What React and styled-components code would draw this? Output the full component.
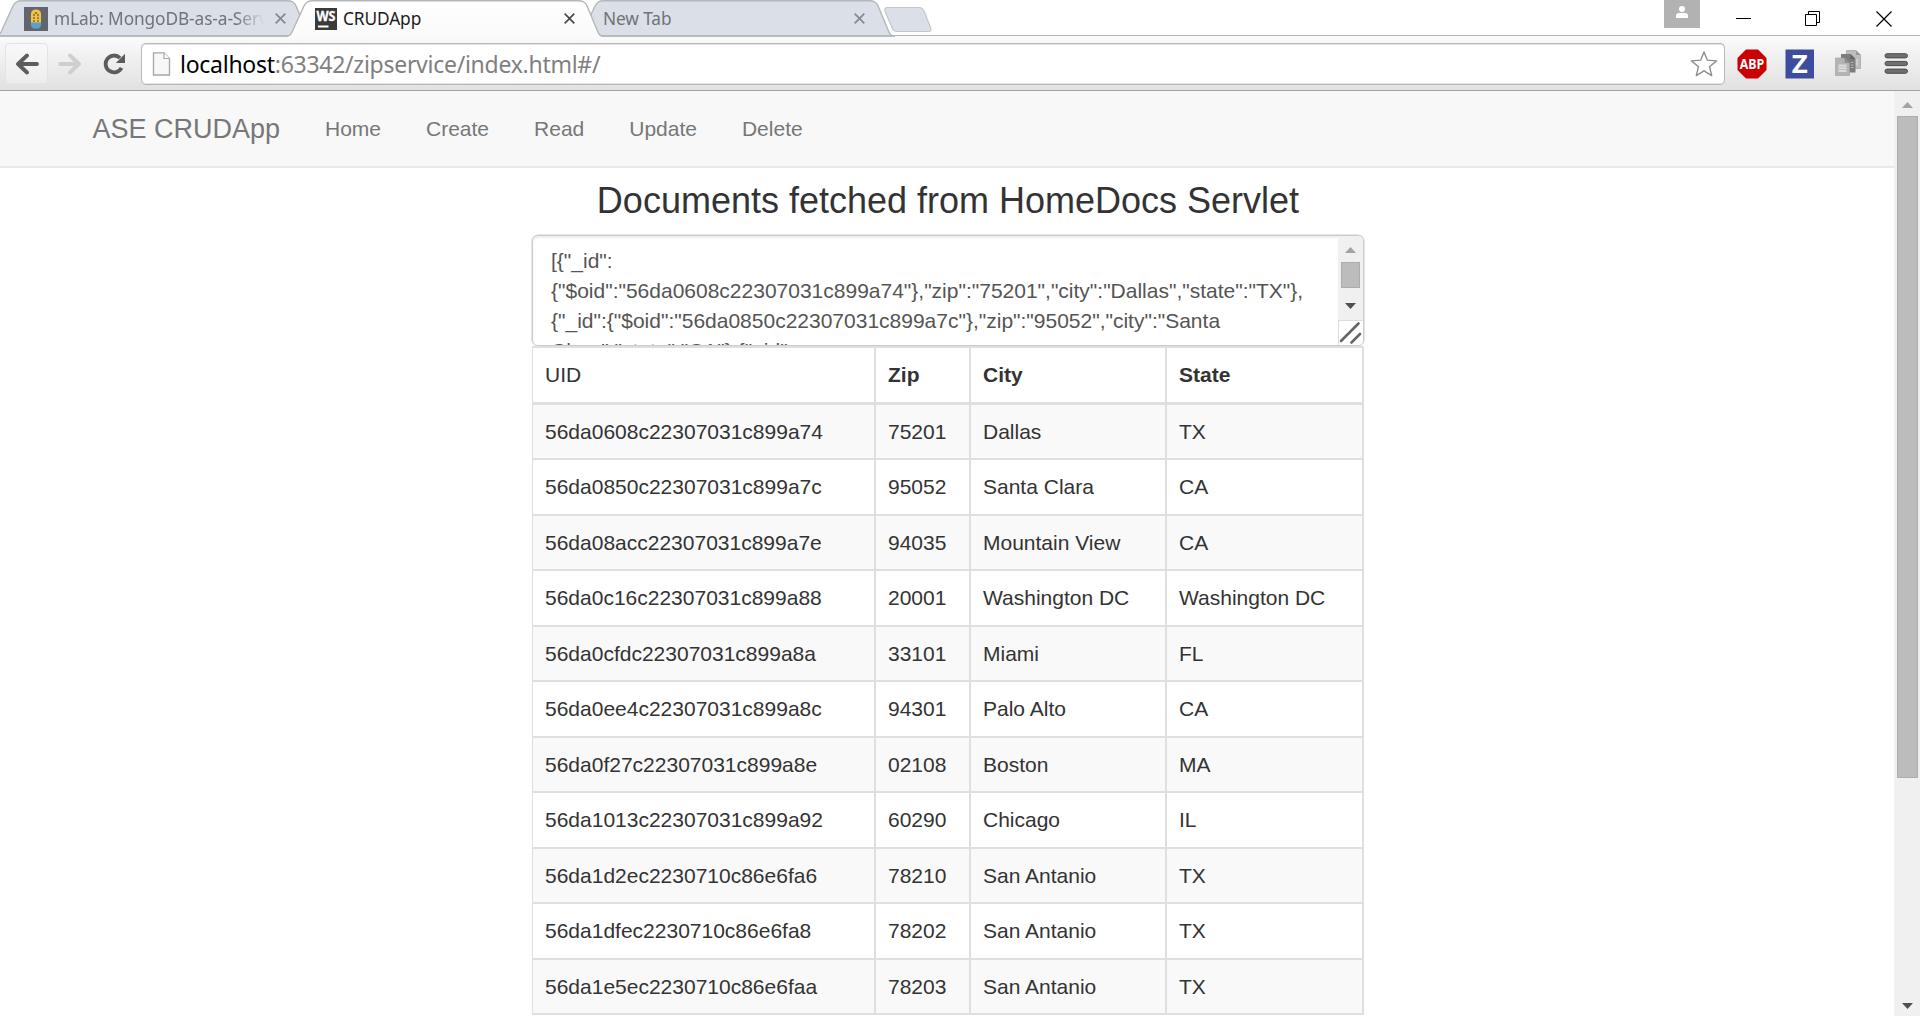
import React from "react";
import styled, { createGlobalStyle } from "styled-components";

const GlobalStyle = createGlobalStyle`
  * { box-sizing: border-box; }
  body { margin: 0; background: #fff; overflow: hidden; }
`;

const uiFont = `"Noto Sans", "Open Sans", sans-serif`;
const pageFont = `"Liberation Sans", Arial, sans-serif`;

const Window = styled.div`
  width: 1920px;
  height: 1016px;
  display: flex;
  flex-direction: column;
  overflow: hidden;
  background: #fff;
`;

/* ---------- tab strip ---------- */
const TabStrip = styled.div`
  height: 37px;
  flex: none;
  display: flex;
  align-items: flex-start;
  box-shadow: inset 0 -1px #fbfbfb, inset 0 -2px #b3b3b3;
  position: relative;
  z-index: 1;
`;
const Tab = styled.div`
  position: relative;
  z-index: ${(p) => (p.$active ? 2 : 1)};
  width: 318px;
  height: 37px;
  flex: none;
  margin-left: ${(p) => (p.$first ? -5 : -27)}px;
  padding-left: ${(p) => (p.$bare ? 26 : 29)}px;
  display: flex;
  align-items: center;
`;
const TabShape = styled.svg`
  position: absolute;
  left: 0;
  top: 0;
  z-index: -1;
`;
const Favicon = styled.svg`
  flex: none;
  overflow: visible;
  margin-right: ${(p) => p.$gap}px;
`;
const TabTitle = styled.span`
  width: ${(p) => p.$w}px;
  height: 30px;
  flex: none;
  margin-top: 1px;
  overflow: hidden;
  white-space: nowrap;
  font: 400 17.3px/30px ${uiFont};
  letter-spacing: ${(p) => p.$ls}px;
  color: ${(p) => (p.$active ? "#1c1c1c" : "#707377")};
  ${(p) => p.$fade && "mask-image: linear-gradient(90deg, #000 86%, transparent);"}
`;
const TabClose = styled.svg`
  flex: none;
  margin-left: ${(p) => p.$ml}px;
`;
const NewTab = styled.svg`
  margin: 6px 0 0 -12px;
`;
const WindowControls = styled.div`
  margin-left: auto;
  display: flex;
  align-items: flex-start;
  padding-right: 28px;
`;
const Profile = styled.div`
  width: 36px;
  height: 28px;
  background: #b2b2b2;
  display: flex;
  justify-content: center;
  margin-right: 36px;
  padding-top: 6px;
`;
const Control = styled.svg`
  margin: 11px ${(p) => p.$mr}px 0 0;
`;

/* ---------- toolbar ---------- */
const Toolbar = styled.div`
  height: 54px;
  flex: none;
  display: flex;
  align-items: center;
  padding: 0 11px 0 5px;
  background: linear-gradient(#fafafa, #e1e1e1);
  border-bottom: 1px solid #a3a3a3;
`;
const ToolButton = styled.div`
  width: 43px;
  height: 41px;
  display: flex;
  align-items: center;
  justify-content: center;
  padding-left: ${(p) => p.$nudge || 0}px;
  border: 1px solid ${(p) => (p.$raised ? "#e4e4e4" : "transparent")};
  border-radius: 4px;
  background: ${(p) => (p.$raised ? "linear-gradient(#f8f8f8, #ededed)" : "none")};
`;
const Omnibox = styled.div`
  width: 1584px;
  height: 42px;
  display: flex;
  align-items: center;
  margin: 0 12px 0 7px;
  padding: 0 6px 0 10px;
  background: #fff;
  border: 1px solid #bababa;
  border-bottom-color: #b5b5b5;
  border-radius: 5px;
  box-shadow: inset 0 1px #e2e2e2, inset 0 -1px #e6e6e6;
`;
const Url = styled.div`
  flex: 1;
  margin-left: 9px;
  font: 400 23px/38px ${uiFont};
  letter-spacing: -0.27px;
  color: #808080;
  b { font-weight: 400; color: #000; }
`;
const Extension = styled.svg`
  flex: none;
  overflow: visible;
  margin-right: ${(p) => p.$mr}px;
`;

/* ---------- page ---------- */
const Viewport = styled.div`
  flex: 1;
  min-height: 0;
  display: flex;
`;
const Page = styled.div`
  flex: 1;
  overflow: hidden;
  font-family: ${pageFont};
  color: #333;
`;
const Navbar = styled.nav`
  height: 77px;
  display: flex;
  align-items: center;
  padding: 0 0 0 92.4px;
  background: #f8f8f8;
  border-bottom: 2px solid #e9e9e9;
`;
const Brand = styled.span`
  margin-right: 22.5px;
  font-size: 27px;
  line-height: 30px;
  color: #777;
`;
const NavLink = styled.a`
  padding: 0 22.5px;
  font-size: 21px;
  line-height: 30px;
  color: #777;
`;
const Column = styled.main`
  width: 832px;
  margin-left: 532px;
`;
const Heading = styled.h3`
  margin: 0;
  height: 67px;
  padding-top: 13px;
  font-size: 36px;
  line-height: 40px;
  font-weight: 400;
  text-align: center;
`;
const TextBox = styled.div`
  height: 111px;
  display: flex;
  border: 1px solid #ccc;
  border-radius: 6px;
  box-shadow: 0 0 0 0.5px #ccc, inset 0 2px 2px rgba(0, 0, 0, 0.07);
  overflow: hidden;
`;
const TextBody = styled.div`
  flex: 1;
  padding: 10px 0 0 18px;
  font-size: 21px;
  line-height: 30px;
  white-space: pre;
  color: #555;
`;
const InnerBar = styled.div`
  width: 25px;
  display: flex;
  flex-direction: column;
  align-items: center;
  background: #f0f0f0;
  padding-top: 11px;
`;
const InnerThumb = styled.div`
  width: 19px;
  height: 26px;
  margin: 9px 0 15px;
  background: #bcbcbc;
  border: 1px solid #acacac;
`;
const Resizer = styled.svg`
  margin-top: auto;
  background: #fff;
`;

const Table = styled.div`
  border-top: 2px solid #dfdfdf;
`;
const Row = styled.div`
  display: grid;
  grid-template-columns: 344px 95px 196px 197px;
  height: ${(p) => p.$h}px;
  border-bottom: ${(p) => (p.$head ? 3 : 2)}px solid #dfdfdf;
  background: ${(p) => (p.$striped ? "#f9f9f9" : "#fff")};
`;
const Cell = styled.div`
  display: flex;
  align-items: center;
  padding-left: 12px;
  border-right: 2px solid #dfdfdf;
  font-size: 21px;
  line-height: 30px;
  font-weight: ${(p) => (p.$bold ? 700 : 400)};
  &:first-child { border-left: 1px solid #dfdfdf; }
`;

const PageScrollbar = styled.div`
  width: 26px;
  display: flex;
  flex-direction: column;
  align-items: center;
  background: #f0f0f0;
  padding: 11px 0 7px;
`;
const PageThumb = styled.div`
  width: 21px;
  height: 662px;
  margin: 8px 0 auto;
  background: #bcbcbc;
  border: 1px solid #adadad;
`;

const rows = [
  ["56da0608c22307031c899a74", "75201", "Dallas", "TX"],
  ["56da0850c22307031c899a7c", "95052", "Santa Clara", "CA"],
  ["56da08acc22307031c899a7e", "94035", "Mountain View", "CA"],
  ["56da0c16c22307031c899a88", "20001", "Washington DC", "Washington DC"],
  ["56da0cfdc22307031c899a8a", "33101", "Miami", "FL"],
  ["56da0ee4c22307031c899a8c", "94301", "Palo Alto", "CA"],
  ["56da0f27c22307031c899a8e", "02108", "Boston", "MA"],
  ["56da1013c22307031c899a92", "60290", "Chicago", "IL"],
  ["56da1d2ec2230710c86e6fa6", "78210", "San Antanio", "TX"],
  ["56da1dfec2230710c86e6fa8", "78202", "San Antanio", "TX"],
  ["56da1e5ec2230710c86e6faa", "78203", "San Antanio", "TX"],
];

const json = `[{"_id":
{"$oid":"56da0608c22307031c899a74"},"zip":"75201","city":"Dallas","state":"TX"},
{"_id":{"$oid":"56da0850c22307031c899a7c"},"zip":"95052","city":"Santa
Clara","state":"CA"},{"_id":`;

function TabBackdrop({ active }) {
  const outline =
    "M0 36.5 C4 36 5 34 6.5 31 L17.5 7 C20 2 22 .7 27 .7 L292 .7 C297 .7 299.500 2 301.500 7 L311.500 31 C313 34.500 314 36 318 36.500";
  return (
    <TabShape width="318" height="37" viewBox="0 0 318 37">
      <defs>
        <linearGradient id="activeTab" x1="0" y1="0" x2="0" y2="1">
          <stop offset="0" stopColor="#fff" />
          <stop offset="1" stopColor="#fafafa" />
        </linearGradient>
      </defs>
      <path
        d={outline + (active ? " V37 H0 Z" : " Z")}
        fill={active ? "url(#activeTab)" : "#dbe0e8"}
      />
      <path d={outline} fill="none" stroke="#b4b7ba" strokeWidth="1.400" />
      {!active && <path d="M3 36 H315" stroke="#a9abae" strokeWidth="1.500" />}
    </TabShape>
  );
}

function Cross({ ml, color }) {
  return (
    <TabClose $ml={ml} width="11" height="11" viewBox="0 0 11 11">
      <path d="M.7 .7 L10.300 10.300 M10.300 .7 L.7 10.300" stroke={color} strokeWidth="1.700" />
    </TabClose>
  );
}

const Arrow = ({ color, flip }) => (
  <svg width="24" height="22" viewBox="0 0 24 22">
    <path
      d="M12 2.500 L3 11 L12 19.500 M3.500 11 H22"
      transform={flip ? "translate(24 0) scale(-1 1)" : undefined}
      fill="none"
      stroke={color}
      strokeWidth="3.800"
      strokeLinecap="round"
      strokeLinejoin="round"
    />
  </svg>
);

const Triangle = ({ down }) => (
  <svg width="11" height="6" viewBox="0 0 11 6">
    {down ? <path d="M0 0 H11 L5.500 6 Z" fill="#505050" /> : <path d="M0 6 H11 L5.500 0 Z" fill="#a3a3a3" />}
  </svg>
);

export default function App() {
  return (
    <Window>
      <GlobalStyle />
      <TabStrip>
        <Tab $first>
          <TabBackdrop />
          <Favicon $gap={6} width="24" height="24" viewBox="0 0 24 24">
            <rect width="24" height="24" fill="#61666e" />
            <path d="M7 16 V7 Q7 2.500 12 2.500 T17 7 V16 Z" fill="#f6c244" />
            <path d="M10 15 V8 Q10 6 12 6 T14 8 V15" fill="none" stroke="#675d45" strokeWidth="1.300" strokeDasharray="2 1" />
            <path d="M7 15.500 H17 V19 L15 21.500 H9 L7 19 Z" fill="#5f9dd0" />
          </Favicon>
          <TabTitle $w={211} $ls={-0.1} $fade>mLab: MongoDB-as-a-Serv</TabTitle>
          <Cross ml={10} color="#85888c" />
        </Tab>
        <Tab $active>
          <TabBackdrop active />
          <Favicon $gap={6} width="22" height="22" viewBox="0 0 22 22">
            <rect width="22" height="22" fill="#3a3a3a" />
            <text x="1.500" y="12.800" fontFamily="Open Sans, sans-serif" fontWeight="700" fontSize="14" fill="#fff" stroke="#fff" strokeWidth=".3" textLength="19" lengthAdjust="spacingAndGlyphs">WS</text>
            <rect x="3" y="17.500" width="10.500" height="2" fill="#fff" />
          </Favicon>
          <TabTitle $w={210} $ls={-0.1} $active>CRUDApp</TabTitle>
          <Cross ml={11} color="#4b4b4b" />
        </Tab>
        <Tab $bare>
          <TabBackdrop />
          <TabTitle $w={240} $ls={-0.1}>New Tab</TabTitle>
          <Cross ml={11} color="#85888c" />
        </Tab>
        <NewTab width="50" height="27" viewBox="0 0 50 27">
          <path
            d="M5 1.500 H36 Q39.500 1.500 41 5 L47.500 21.500 Q49 25.500 45.500 25.500 H14.500 Q10.500 25.500 9 21.500 L2 5 Q.8 1.500 5 1.500 Z"
            fill="#dbe0e8"
            stroke="#c3c6ca"
            strokeWidth="1.200"
          />
        </NewTab>
        <WindowControls>
          <Profile>
            <svg width="12" height="12" viewBox="0 0 12 12">
              <circle cx="6" cy="3" r="3" fill="#fff" />
              <path d="M0 12 V10 Q0 7 3 7 H9 Q12 7 12 10 V12 Z" fill="#fff" />
            </svg>
          </Profile>
          <Control $mr={54} width="15" height="15">
            <path d="M0 7.500 H15" stroke="#000" />
          </Control>
          <Control $mr={56} width="15" height="15" fill="none" stroke="#000">
            <path d="M.5 3.500 H11.500 V14.500 H.5 Z M3.500 3.500 V.5 H14.500 V11.500 H11.500" />
          </Control>
          <Control $mr={0} width="16" height="16">
            <path d="M.5 .5 L15.500 15.500 M15.500 .5 L.5 15.500" stroke="#000" strokeWidth="1.200" />
          </Control>
        </WindowControls>
      </TabStrip>

      <Toolbar>
        <ToolButton $raised>
          <Arrow color="#5c5c5c" />
        </ToolButton>
        <ToolButton>
          <Arrow color="#cfcfcf" flip />
        </ToolButton>
        <ToolButton $nudge={4}>
          <svg width="24" height="22" viewBox="0 0 24 22">
            <path d="M18.500 14.800 A8.400 8.400 0 1 1 17 5" fill="none" stroke="#5c5c5c" strokeWidth="3.800" />
            <path d="M22 .8 V10 H12.800 Z" fill="#5c5c5c" />
          </svg>
        </ToolButton>
        <Omnibox>
          <svg width="19" height="24" viewBox="0 0 19 24">
            <path d="M1.500 .8 H12 L17.500 6.500 V23 H1.500 Z" fill="#f8f8f8" stroke="#a5a5a5" strokeWidth="1.300" />
            <path d="M12 .8 V6.500 H17.500" fill="#fff" stroke="#a5a5a5" strokeWidth="1.200" />
          </svg>
          <Url>
            <b>localhost</b>:63342/zipservice/index.html#/
          </Url>
          <svg width="28" height="28" viewBox="0 0 28 28">
            <path
              d="M14 2 L17.300 10.100 L26.500 10.900 L19.500 16.700 L21.700 25.600 L14 20.800 L6.300 25.600 L8.500 16.700 L1.500 10.900 L10.700 10.100 Z"
              fill="#fff"
              stroke="#8c8c8c"
              strokeWidth="1.400"
              strokeLinejoin="round"
            />
          </svg>
        </Omnibox>
        <Extension $mr={18} width="30" height="30" viewBox="0 0 30 30">
          <path d="M9 .5 H21 L29.500 9 V21 L21 29.500 H9 L.5 21 V9 Z" fill="#cb0000" />
          <text x="2.800" y="19.900" fontFamily="Open Sans, sans-serif" fontWeight="700" fontSize="14" fill="#fff" textLength="24.500" lengthAdjust="spacingAndGlyphs">ABP</text>
        </Extension>
        <Extension $mr={20} width="30" height="30" viewBox="0 0 30 30">
          <rect x=".5" y=".5" width="28.500" height="29" fill="#3e4c9e" />
          <text x="6.800" y="23.800" fontFamily="Open Sans, sans-serif" fontWeight="700" fontSize="25" fill="#fff" textLength="16" lengthAdjust="spacingAndGlyphs">Z</text>
        </Extension>
        <Extension $mr={23} width="26" height="27" viewBox="0 0 26 27">
          <path d="M11.500 .5 H21 L25.500 5 V18.500 H11.500 Z" fill="#bdbdbd" stroke="#a8a8a8" strokeWidth=".8" />
          <path d="M21 .5 V5 H25.500 Z" fill="#999" />
          <path d="M14 9 H23 V15.500 H14 Z" fill="#d0d0d0" />
          <path d="M6 4 H15.500 L20.500 9 V22.500 H6 Z" fill="#7c7c7c" />
          <path d="M15.500 4 V9 H20.500 Z" fill="#646464" />
          <path d="M16 12.500 H18.500 M16 15 H18.500 M16 17.500 H18.500" stroke="#b5b5b5" />
          <path d="M.5 8 H9.500 L14.500 13 V25.500 H.5 Z" fill="#b4b4b4" stroke="#a0a0a0" strokeWidth=".6" />
          <path d="M9.500 8 V13 H14.500 Z" fill="#8f8f8f" />
          <path d="M3.500 14.500 H11.500 V22 H3.500 Z" fill="#dcdcdc" />
          <path d="M3.500 17 H11.500 M3.500 19.500 H11.500" stroke="#c0c0c0" />
        </Extension>
        <svg width="25" height="22" viewBox="0 0 25 22">
          {[0, 7.7, 15.4].map((y) => (
            <rect key={y} x="1" y={y + 0.7} width="22.500" height="4.200" rx="2.100" fill="#6f6f6f" stroke="#4c4c4c" strokeWidth="1" />
          ))}
        </svg>
      </Toolbar>

      <Viewport>
        <Page>
          <Navbar>
            <Brand>ASE CRUDApp</Brand>
            {["Home", "Create", "Read", "Update", "Delete"].map((label) => (
              <NavLink key={label}>{label}</NavLink>
            ))}
          </Navbar>
          <Column>
            <Heading>Documents fetched from HomeDocs Servlet</Heading>
            <TextBox>
              <TextBody>{json}</TextBody>
              <InnerBar>
                <Triangle />
                <InnerThumb />
                <Triangle down />
                <Resizer width="25" height="25" viewBox="0 0 25 25">
                  <path d="M0 .5 H25 M.5 0 V25" stroke="#ddd" />
                  <path d="M3 21 L20.500 3.500 M13.500 22.500 L22 14" stroke="#666" strokeWidth="2.600" strokeLinecap="round" />
                </Resizer>
              </InnerBar>
            </TextBox>
            <Table>
              <Row $head $h={57}>
                <Cell>UID</Cell>
                <Cell $bold>Zip</Cell>
                <Cell $bold>City</Cell>
                <Cell $bold>State</Cell>
              </Row>
              {rows.map((row, i) => (
                <Row key={row[0]} $h={i % 2 ? 56 : 55} $striped={i % 2 === 0}>
                  {row.map((value, c) => (
                    <Cell key={c}>{value}</Cell>
                  ))}
                </Row>
              ))}
            </Table>
          </Column>
        </Page>
        <PageScrollbar>
          <Triangle />
          <PageThumb />
          <Triangle down />
        </PageScrollbar>
      </Viewport>
    </Window>
  );
}
